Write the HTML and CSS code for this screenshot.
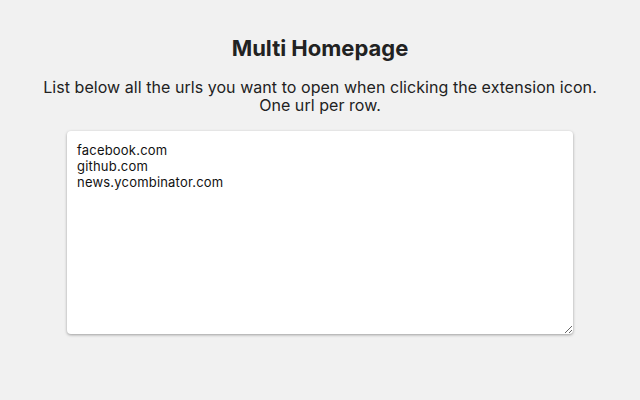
FILE: index.html
```html
<!DOCTYPE html>
<html>
<head>
<meta charset="utf-8">
<link rel="stylesheet" href="styles.css">
</head>
<body>
<main class="page">
  <h1 class="title">Multi Homepage</h1>
  <p class="lead">List below all the urls you want to open when clicking the extension icon.<br>One url per row.</p>
  <textarea class="urls" spellcheck="false">facebook.com
github.com
news.ycombinator.com</textarea>
</main>
</body>
</html>
```
FILE: styles.css
```css
html, body {
  margin: 0;
  padding: 0;
  background: #f1f1f1;
  height: 100%;
}
.page {
  display: flex;
  flex-direction: column;
  align-items: center;
  font-family: Inter, "Liberation Sans", sans-serif;
  color: #222;
  padding-top: 35px;
}
.title {
  margin: 0;
  font-size: 22px;
  font-weight: 700;
  line-height: 27px;
}
.lead {
  margin: 16px 0 0;
  font-size: 16px;
  line-height: 18px;
  text-align: center;
  letter-spacing: 0.05px;
}
.urls {
  margin-top: 17px;
  width: 506px;
  height: 203px;
  box-sizing: border-box;
  border: none;
  border-radius: 4px;
  background: #fff;
  box-shadow: 0 1px 3px rgba(0,0,0,0.35);
  padding: 11px 10px;
  font-family: Inter, "Liberation Sans", sans-serif;
  font-size: 13px;
  line-height: 16px;
  letter-spacing: 0.2px;
  color: #111;
  outline: none;
  resize: both;
}
```
